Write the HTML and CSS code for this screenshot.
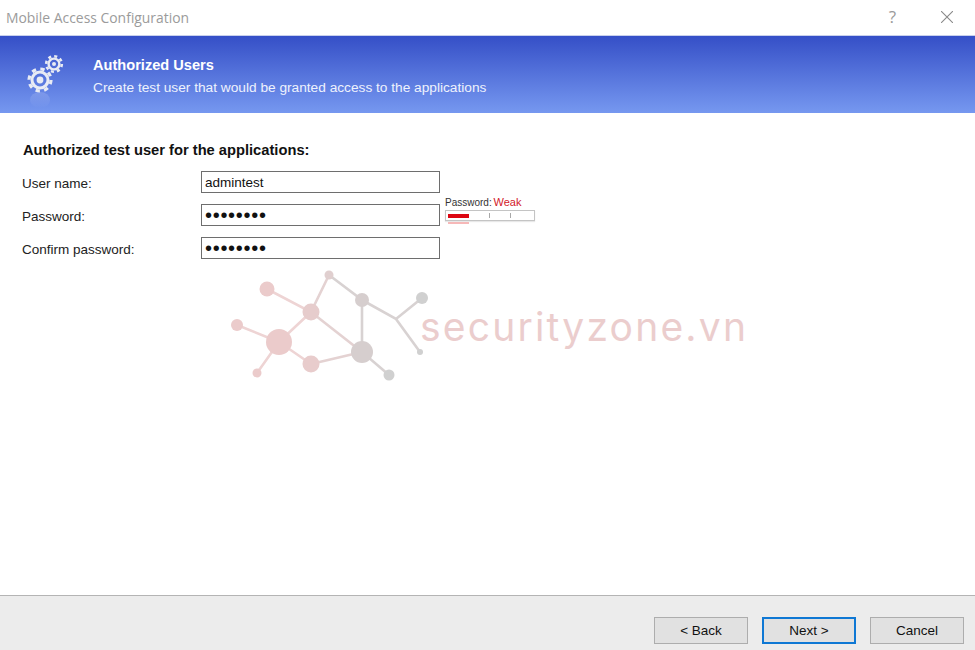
FILE: index.html
```html
<!DOCTYPE html>
<html>
<head>
    <title>Mobile Access Configuration</title>
    <link rel="stylesheet" href="styles.css">
</head>
<body>
    <div class="dialog">
        <!-- Title bar -->
        <div class="titleBar">
            <span class="titleText">Mobile Access Configuration</span>
            <span class="helpMark">?</span>
            <svg class="closeMark" width="12" height="12" viewBox="0 0 12 12">
                <path d="M0 0 L12 12 M12 0 L0 12" stroke="#8a8a8a" stroke-width="1.1" fill="none"/>
            </svg>
        </div>

        <!-- Blue header -->
        <div class="banner">
            <svg class="gears" width="40" height="56" viewBox="0 0 40 56">
                <defs>
                    <linearGradient id="fade" x1="0" y1="0" x2="0" y2="1">
                        <stop offset="0" stop-color="#fff" stop-opacity="0.16"/>
                        <stop offset="1" stop-color="#fff" stop-opacity="0"/>
                    </linearGradient>
                    <filter id="soft">
                        <feGaussianBlur stdDeviation="0.45"/>
                    </filter>
                </defs>
                <ellipse cx="15" cy="48" rx="10" ry="8" fill="url(#fade)"/>
                <g fill="none" stroke="#e8ebf4" filter="url(#soft)">
                    <circle cx="15" cy="28" r="8" stroke-width="3"/>
                    <circle cx="15" cy="28" r="11" stroke-width="3.2" stroke-dasharray="4.32 4.32"/>
                    <circle cx="29" cy="12" r="5.4" stroke-width="2.4"/>
                    <circle cx="29" cy="12" r="7.8" stroke-width="2.6" stroke-dasharray="3.06 3.06"/>
                    <circle cx="15" cy="28" r="3.4" fill="#e8ebf4" stroke="none"/>
                    <circle cx="29" cy="12" r="2" fill="#e8ebf4" stroke="none"/>
                </g>
            </svg>
            <div class="bannerText">
                <div class="bannerTitle">Authorized Users</div>
                <div class="bannerSub">Create test user that would be granted access to the applications</div>
            </div>
        </div>

        <!-- Form -->
        <div class="content">
            <h1 class="formTitle">Authorized test user for the applications:</h1>
            <div class="formGrid">
                <label for="user_name">User name:</label>
                <input class="field" type="text" id="user_name" value="admintest">
                <span></span>

                <label for="user_pass">Password:</label>
                <input class="field secret" type="password" id="user_pass" value="12345678">
                <div class="meter">
                    <div class="meterLabel">Password: <span class="weak">Weak</span></div>
                    <div class="meterBar">
                        <div class="meterFill" style="width: 21px"></div>
                        <div class="meterTick"></div>
                        <div class="meterTick"></div>
                    </div>
                    <div class="meterGlow"></div>
                </div>

                <label for="user_confirm">Confirm password:</label>
                <input class="field secret" type="password" id="user_confirm" value="12345678">
                <span></span>
            </div>

            <!-- Watermark -->
            <svg class="markGraph" width="210" height="130" viewBox="0 0 210 130">
                <g stroke-width="2.6" fill="none">
                    <path d="M47 29 L91 52 L59 82 M17 65 L59 82 M37 113 L59 82 L91 104" stroke="#eed4d4"/>
                    <path d="M91 52 L109 15 M91 52 L142 92 M91 104 L142 92" stroke="#e4d2d2"/>
                    <path d="M109 15 L142 40 L142 92 L169 115 M142 40 L176 59 L202 38 M176 59 L200 92" stroke="#d8d2d2"/>
                </g>
                <circle cx="47" cy="29" r="7.5" fill="#ebcbcb"/>
                <circle cx="17" cy="65" r="6" fill="#ebcbcb"/>
                <circle cx="59" cy="82" r="13" fill="#ebcbcb"/>
                <circle cx="37" cy="113" r="4.5" fill="#ebcbcb"/>
                <circle cx="91" cy="52" r="8.5" fill="#e6cccc"/>
                <circle cx="91" cy="104" r="8.5" fill="#e8cccc"/>
                <circle cx="109" cy="15" r="4.5" fill="#e0cfcf"/>
                <circle cx="142" cy="40" r="7" fill="#d6cece"/>
                <circle cx="142" cy="92" r="11" fill="#d6cece"/>
                <circle cx="169" cy="115" r="5.5" fill="#d0d0d0"/>
                <circle cx="202" cy="38" r="6" fill="#d0d0d0"/>
                <circle cx="200" cy="92" r="3" fill="#d0d0d0"/>
            </svg>
            <div class="markText">securityzone.vn</div>
        </div>

        <!-- Footer buttons -->
        <div class="footer">
            <button class="btn">&lt; Back</button>
            <button class="btn btnDefault">Next &gt;</button>
            <button class="btn">Cancel</button>
        </div>
    </div>
</body>
</html>
```

FILE: styles.css
```css
html, body {
    margin: 0;
    padding: 0;
}

body {
    font-family: "Liberation Sans", Arial, sans-serif;
    background-color: #fff;
}

.dialog {
    width: 975px;
    height: 650px;
    display: flex;
    flex-direction: column;
    overflow: hidden;
}

/* Title bar */
.titleBar {
    height: 35px;
    display: flex;
    align-items: center;
    padding-left: 6px;
    border-bottom: 1px solid #c8d0ec;
    box-sizing: content-box;
}

.titleText {
    font-family: "Open Sans", sans-serif;
    font-size: 13.9px;
    color: #9b9b9b;
    flex: 1;
}

.helpMark {
    font-family: "Open Sans", sans-serif;
    font-size: 17px;
    line-height: 17px;
    color: #9a9a9a;
    margin: -3px 45px 0 0;
}

.closeMark {
    margin: -1px 22px 0 0;
}

/* Blue header */
.banner {
    height: 77px;
    display: flex;
    align-items: flex-start;
    background: linear-gradient(to bottom, #354fc7, #7698f0);
    color: #fff;
}

.gears {
    margin: 16px 0 0 25px;
}

.bannerText {
    margin-left: 28px;
}

.bannerTitle {
    font-size: 14.6px;
    font-weight: bold;
    margin-top: 21px;
    line-height: 16px;
}

.bannerSub {
    font-size: 13.7px;
    margin-top: 7px;
    line-height: 16px;
    color: #eef2fd;
}

/* Form */
.content {
    flex: 1;
    position: relative;
    padding: 29px 0 0 22px;
}

.formTitle {
    font-size: 14.7px;
    font-weight: bold;
    color: #111;
    margin: 0 0 13px 1px;
    line-height: 16px;
}

.formGrid {
    display: grid;
    grid-template-columns: 179px 239px 95px;
    grid-auto-rows: 22px;
    row-gap: 11px;
    align-items: center;
}

.formGrid label {
    font-size: 13.5px;
    color: #222;
    margin-top: 2px;
}

.field {
    width: 239px;
    height: 22px;
    box-sizing: border-box;
    border: 1px solid #6e6e6e;
    padding: 0 3px;
    margin: 0;
    font-family: "Liberation Sans", Arial, sans-serif;
    font-size: 13.5px;
    color: #111;
    background-color: #fff;
    outline: none;
}

.secret {
    font-size: 20px;
    letter-spacing: 0.7px;
}

/* Password strength */
.meter {
    margin-left: 5px;
    width: 90px;
    height: 22px;
    align-self: start;
    margin-top: -8px;
}

.meterLabel {
    font-size: 10px;
    line-height: 13px;
    color: #333;
    white-space: nowrap;
    word-spacing: -1px;
}

.weak {
    font-size: 11px;
    color: #d2202a;
}

.meterBar {
    height: 11px;
    box-sizing: border-box;
    border: 1px solid #c4c4c4;
    display: flex;
    align-items: center;
    padding-left: 2px;
    margin-top: 1px;
    box-shadow: 0 1px 1px #e8e8e8;
}

.meterFill {
    height: 4px;
    background-color: #dc0612;
}

.meterTick {
    width: 1px;
    height: 5px;
    background-color: #a8a8a8;
    margin-left: 20px;
}

.meterGlow {
    width: 21px;
    height: 2px;
    margin: 1px 0 0 3px;
    background-color: #f6b8b8;
}

/* Watermark */
.markGraph {
    position: absolute;
    left: 220px;
    top: 147px;
}

.markText {
    position: absolute;
    left: 420px;
    top: 192px;
    font-family: Inter, sans-serif;
    font-size: 39px;
    line-height: 44px;
    letter-spacing: 2.2px;
    color: #ebcdcd;
    white-space: nowrap;
}

/* Footer buttons */
.footer {
    height: 55px;
    display: flex;
    justify-content: flex-end;
    align-items: flex-start;
    gap: 14px;
    padding: 21px 11px 0 0;
    background-color: #ececec;
    border-top: 1px solid #b4b4b4;
    box-sizing: border-box;
}

.btn {
    width: 94px;
    height: 27px;
    background-color: #e1e1e1;
    border: 1px solid #adadad;
    font-family: "Liberation Sans", Arial, sans-serif;
    font-size: 13.5px;
    color: #111;
    padding: 0;
}

.btnDefault {
    border: 2px solid #0f78d4;
}
```
